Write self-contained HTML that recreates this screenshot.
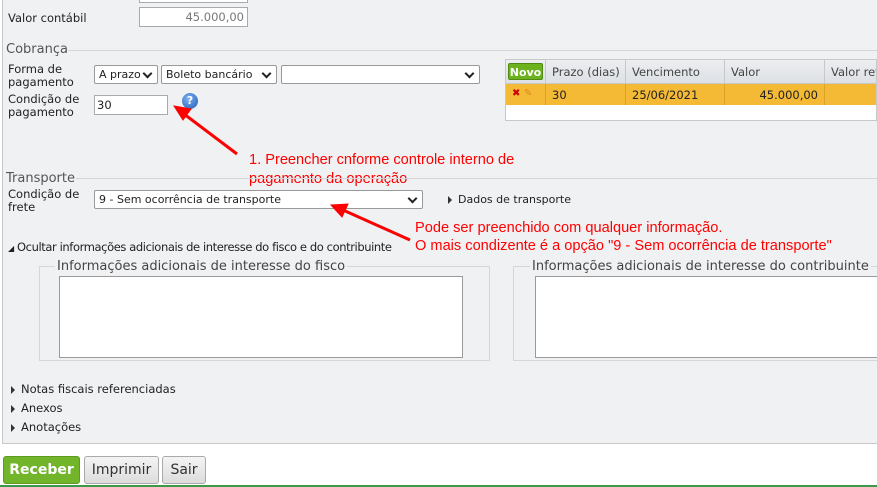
<!DOCTYPE html>
<html><head><meta charset="utf-8"><style>
*{box-sizing:border-box;margin:0;padding:0}
body{width:877px;height:487px;overflow:hidden;background:#fff;font-family:"DejaVu Sans","Liberation Sans",sans-serif;font-size:11.5px;color:#222;position:relative}
.a{position:absolute;white-space:nowrap}
.panel{position:absolute;left:2px;top:-2px;width:880px;height:446px;background:#f0f1f3;border:1px solid #c8c8c8}
.inp{position:absolute;background:#fff;border:1px solid #aaa}
.sel{position:absolute;background:#fff;border:1px solid #999;border-radius:2px;padding:2px 4px;font-size:11px}
.sel:after{content:"";position:absolute;right:6px;top:4px;width:5px;height:5px;border-right:2px solid #222;border-bottom:2px solid #222;transform:rotate(45deg)}
.hl{position:absolute;height:1px;background:#d6d6d6}
.leg{font-size:13px;color:#555}
.red{color:#f00;font-size:14.6px;font-family:"Liberation Sans","DejaVu Sans",sans-serif}
.tri{display:inline-block;width:0;height:0;border-left:4px solid #333;border-top:4px solid transparent;border-bottom:4px solid transparent;margin-right:6px;vertical-align:-1px}
.btn{position:absolute;top:456px;height:28px;border:1px solid #aaa;border-radius:3px;background:linear-gradient(#f4f4f4,#dcdcdc);font-size:14px;color:#333;text-align:center;line-height:26px}
.th{position:absolute;top:0;height:24px;border-right:1px solid #c8c8c8;padding:5px 6px;color:#444}
.td{position:absolute;top:24px;height:21px;border-right:1px solid #d9a32a;padding:4px 6px}
</style></head><body>
<div class="panel"></div>
<div class="inp" style="left:139px;top:-4px;width:109px;height:7px"></div>
<div class="a" style="left:8px;top:11px">Valor contábil</div>
<div class="inp" style="left:139px;top:7px;width:109px;height:20px;text-align:right;padding:2px 3px;color:#777">45.000,00</div>

<div class="a leg" style="left:6px;top:42px">Cobrança</div>
<div class="hl" style="left:68px;top:50px;width:809px"></div>
<div class="a" style="left:8px;top:63px;line-height:13px">Forma de<br>pagamento</div>
<div class="sel" style="left:94px;top:65px;width:64px;height:19px">A prazo</div>
<div class="sel" style="left:161px;top:65px;width:116px;height:19px">Boleto bancário</div>
<div class="sel" style="left:281px;top:65px;width:199px;height:19px"></div>
<div class="a" style="left:8px;top:93px;line-height:13px">Condição de<br>pagamento</div>
<div class="inp" style="left:94px;top:95px;width:74px;height:20px;padding:2px 2px">30</div>
<div class="a" style="left:182px;top:93px;width:16px;height:16px;border-radius:50%;background:radial-gradient(circle at 40% 35%,#7fb0ef,#1f5bb8);color:#fff;font-weight:bold;font-size:11px;text-align:center;line-height:16px">?</div>

<div class="a" style="left:505px;top:59px;width:372px;height:62px;background:#fff;border:1px solid #c8c8c8;overflow:hidden">
 <div style="position:absolute;left:0;top:0;width:372px;height:24px;background:linear-gradient(#eceef1,#dde0e4);border-bottom:1px solid #c8c8c8"></div>
 <div class="th" style="left:0;width:40px;padding:3px 2px"><div style="background:#6cb21e;color:#fff;font-weight:bold;font-size:11px;border-radius:2px;height:17px;line-height:17px;text-align:center;border:1px solid #4e8a14">Novo</div></div>
 <div class="th" style="left:40px;width:80px">Prazo (dias)</div>
 <div class="th" style="left:120px;width:99px">Vencimento</div>
 <div class="th" style="left:219px;width:100px">Valor</div>
 <div class="th" style="left:319px;width:80px">Valor ret</div>
 <div style="position:absolute;left:0;top:24px;width:372px;height:21px;background:#f4b935"></div>
 <div class="td" style="left:0;width:40px;color:#c00;font-weight:bold;font-size:10px">✖ <span style="color:#d98a20">✎</span></div>
 <div class="td" style="left:40px;width:80px">30</div>
 <div class="td" style="left:120px;width:99px">25/06/2021</div>
 <div class="td" style="left:219px;width:100px;text-align:right">45.000,00</div>
</div>

<div class="a red" style="left:249px;top:151px;line-height:19px">1. Preencher cnforme controle interno de<br>pagamento da operação</div>

<div class="a leg" style="left:6px;top:171px">Transporte</div>
<div class="hl" style="left:76px;top:178px;width:801px"></div>
<div class="a" style="left:8px;top:188px;line-height:13px">Condição de<br>frete</div>
<div class="sel" style="left:94px;top:190px;width:329px;height:19px">9 - Sem ocorrência de transporte</div>
<div class="a" style="left:448px;top:193px;font-size:11px"><span class="tri"></span>Dados de transporte</div>

<div class="a red" style="left:415px;top:219px;line-height:18px">Pode ser preenchido com qualquer informação.<br>O mais condizente é a opção "9 - Sem ocorrência de transporte"</div>

<div class="a" style="left:8px;top:240px;font-size:11.5px;letter-spacing:-0.4px"><span style="font-size:8px">◢</span> Ocultar informações adicionais de interesse do fisco e do contribuinte</div>

<div class="a" style="left:39px;top:266px;width:451px;height:95px;border:1px solid #d6d6d6"></div>
<div class="a leg" style="left:55px;top:259px;background:#f0f1f3;padding:0 2px;color:#444">Informações adicionais de interesse do fisco</div>
<div class="inp" style="left:59px;top:276px;width:404px;height:82px;border-color:#999"></div>
<div class="a" style="left:513px;top:266px;width:380px;height:95px;border:1px solid #d6d6d6"></div>
<div class="a leg" style="left:530px;top:259px;background:#f0f1f3;padding:0 2px;color:#444">Informações adicionais de interesse do contribuinte</div>
<div class="inp" style="left:535px;top:276px;width:360px;height:82px;border-color:#999"></div>

<div class="a" style="left:11px;top:382px"><span class="tri"></span>Notas fiscais referenciadas</div>
<div class="a" style="left:11px;top:401px"><span class="tri"></span>Anexos</div>
<div class="a" style="left:11px;top:420px"><span class="tri"></span>Anotações</div>

<div class="btn" style="left:3px;width:77px;background:#72b52a;border-color:#5e9a1e;color:#fff;font-weight:bold">Receber</div>
<div class="btn" style="left:84px;width:75px">Imprimir</div>
<div class="btn" style="left:162px;width:44px">Sair</div>
<div class="a" style="left:0;top:485px;width:877px;height:2px;background:#3a9a4a"></div>

<svg class="a" style="left:0;top:0" width="877" height="487">
 <g stroke="#f00" stroke-width="3" fill="#f00">
  <line x1="237" y1="154" x2="184" y2="114"/>
  <polygon points="174,106 191,109 183,120" stroke-width="1"/>
  <line x1="410" y1="240" x2="343" y2="210"/>
  <polygon points="331,205 348,204 342,217" stroke-width="1"/>
 </g>
</svg>
</body></html>
